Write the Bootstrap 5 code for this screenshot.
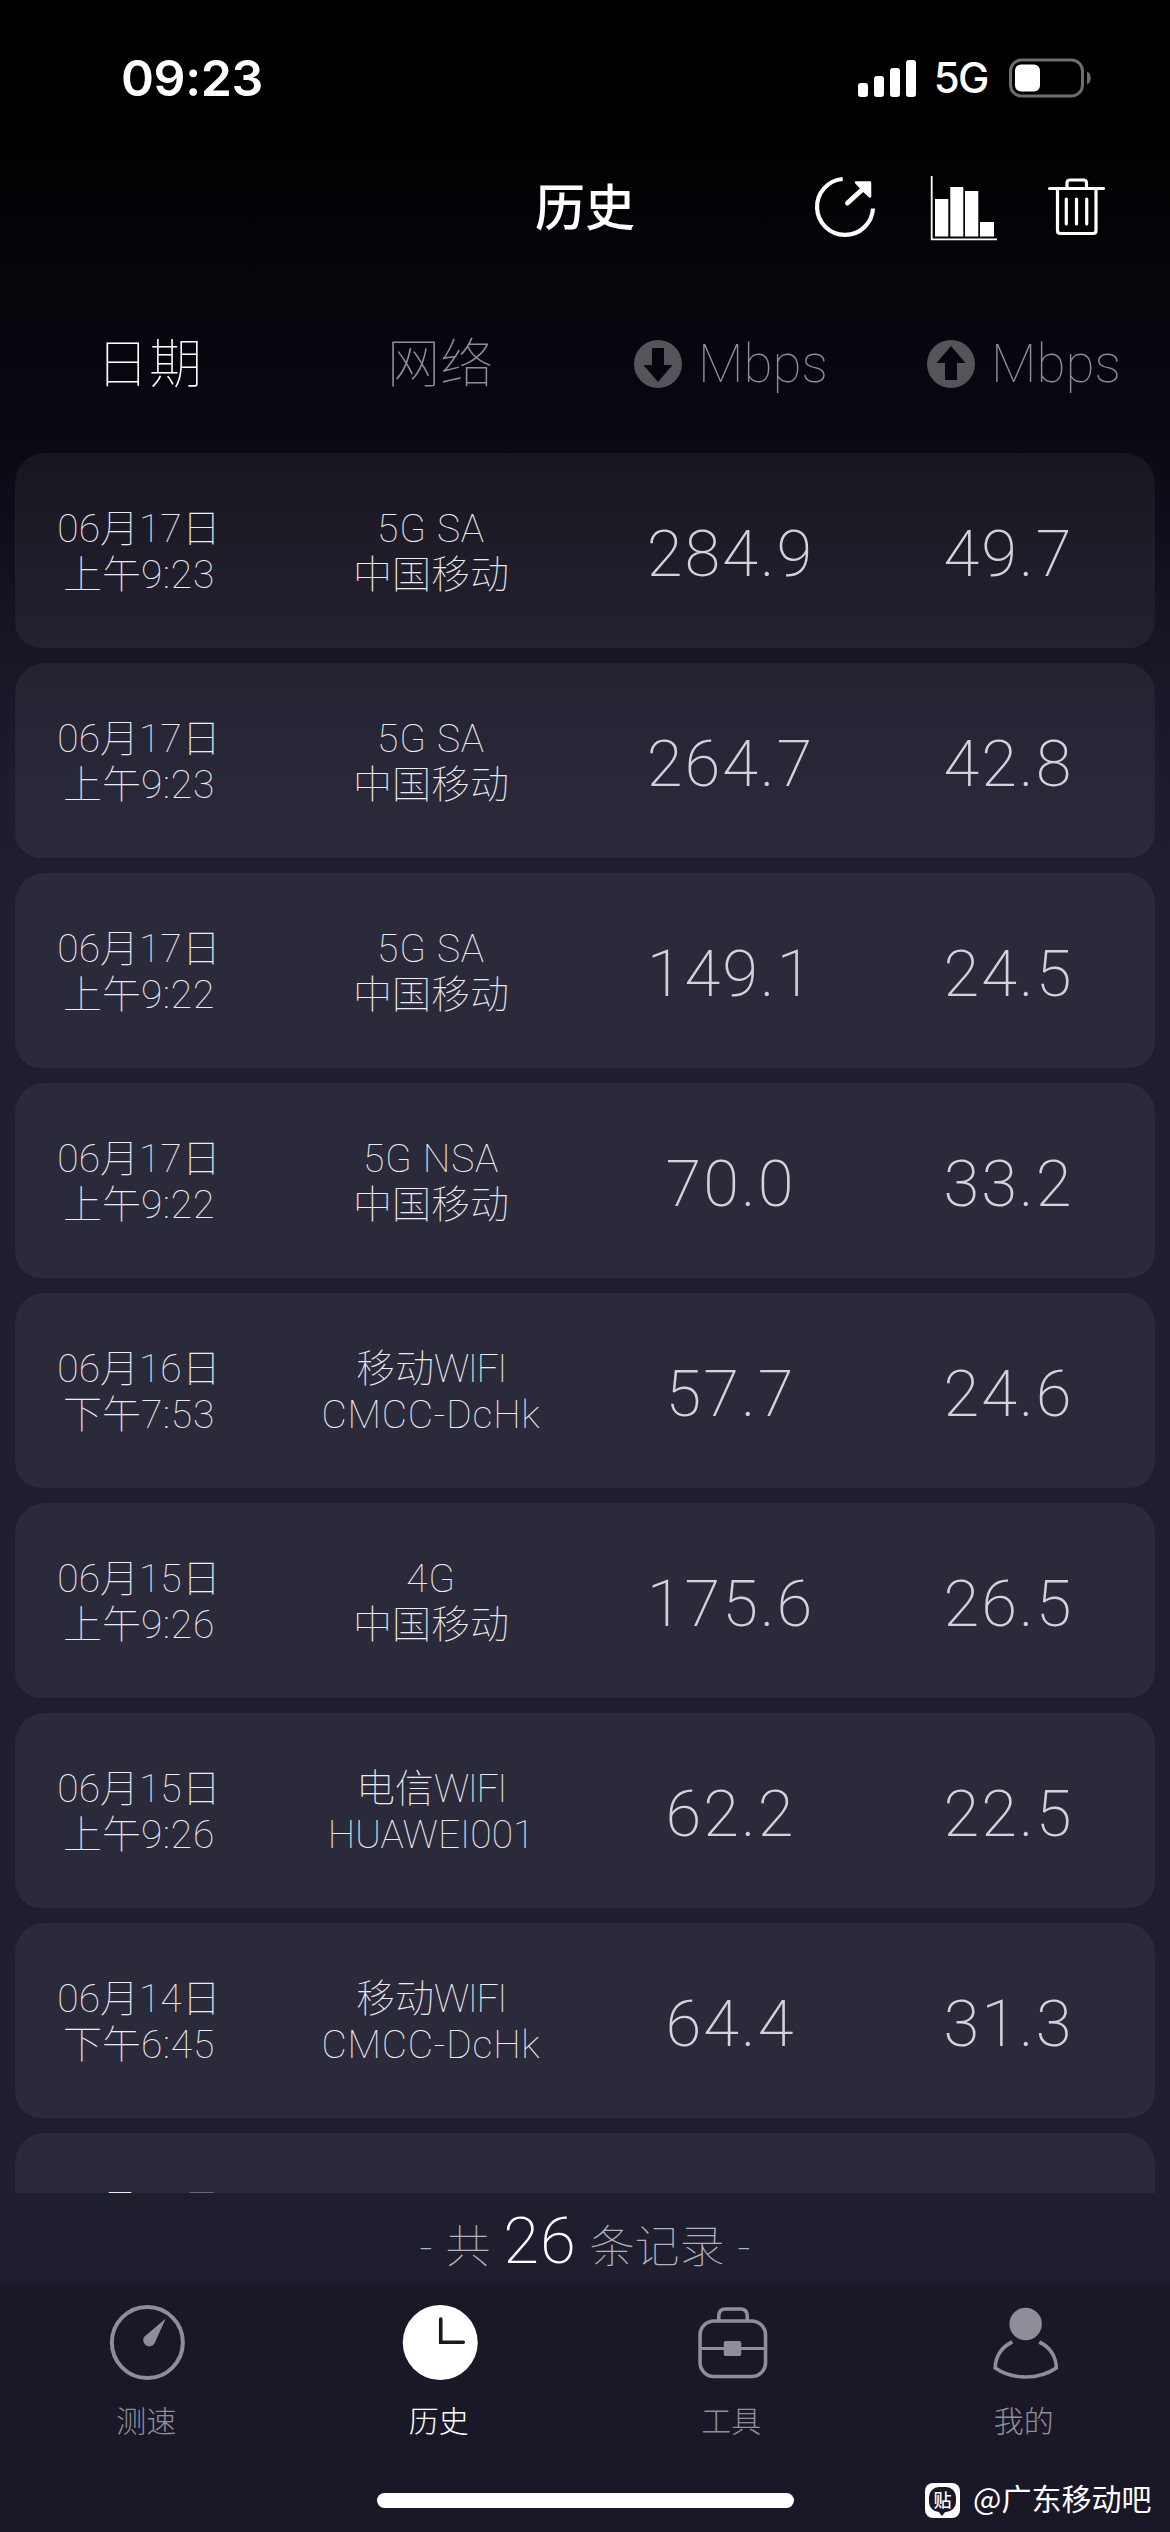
<!DOCTYPE html>
<html lang="zh-CN">
<head>
<meta charset="utf-8">
<meta name="viewport" content="width=device-width, initial-scale=1">
<title>历史</title>
<link href="https://cdn.jsdelivr.net/npm/bootstrap@5.3.0/dist/css/bootstrap.min.css" rel="stylesheet">
<style>
html,body{height:2532px;overflow:hidden}
body{width:1170px;color:#fff;font-family:Roboto,"Noto Sans CJK SC",sans-serif;background:linear-gradient(180deg,#000 0,#000 110px,#04040a 260px,#080812 420px,#0e0d19 520px,#171624 655px,#1c1b2d 760px,#1f1e2f 870px,#1f1e2f 100%)}
.statusbar{height:150px;padding:5px 79px 0 121px}
.clock{font:600 50px/54px Inter,sans-serif;letter-spacing:-.4px}
.net5g{font:500 42px/48px Inter,sans-serif;letter-spacing:-1.5px;margin:0 21px 0 18px}
.titlebar{height:114px;padding-top:24px}
.titlebar h1{font:500 50px/60px "Noto Sans CJK SC",sans-serif;margin:0}
.tools{right:0;top:0}
.cols{height:189px;padding-top:10px;font-weight:100;font-size:53px;line-height:60px;color:#8f8e96}
.cols span{margin-left:16px}
.h1c{width:298px;padding-top:3px}.h2c{width:284px;padding-top:3px;margin-right:52px}.h3c{width:293px}.h4c{width:240px}
.c1{width:248px}.c2{width:336px}.c3{width:263px}.c4{width:293px}
.record{height:195px;border-radius:30px 30px 26px 26px;background:rgba(255,255,255,.055);margin:0 15px 15px;color:#ecebf2;font-weight:100;flex:none}
.meta{font-size:39px;line-height:46px;padding-top:2px}
.meta i{font-style:normal;letter-spacing:.8px}
.meta i.wf{letter-spacing:-1.5px}
.num{font-size:65px;line-height:76px;font-weight:200;letter-spacing:2px;padding-top:6px;color:#d3d2da}
.list{height:1740px;overflow:hidden}
.summary{height:90px;padding-top:13px;font-weight:100;font-size:45px;color:#b3b2bc;word-spacing:2px}
.summary b{font-size:65px;font-weight:200;color:#fff;line-height:70px;letter-spacing:1px}
.tabs{height:249px;background:#1a1827}
.tab{width:292.5px;color:#8f8e98;font:300 30px/32px "Noto Sans CJK SC",sans-serif}
.tab.on{color:#fff}
.homebar{left:377px;top:2493px;width:417px;height:15px;border-radius:8px;background:#fff}
.wmark{left:925px;top:2477px;font:400 30px/40px "Noto Sans CJK SC",sans-serif}
.wmark .tb{width:35px;height:35px;border-radius:8px;background:#fff;margin:6px 13px 0 0;padding:4px 4px 0}
.wmark .tb span{display:block;position:relative;width:27px;height:25px;border-radius:10px;background:#1a1827;font:500 18px/24px "Noto Sans CJK SC",sans-serif;text-align:center}
.wmark .tb span::after{content:"";position:absolute;left:9px;top:24px;border:4.500px solid transparent;border-top:5px solid #1a1827;border-bottom:0}
svg{display:block}
</style>
</head>
<body>
<header class="statusbar d-flex align-items-center justify-content-between">
  <div class="clock">09:23</div>
  <div class="d-flex align-items-center">
    <svg width="58" height="38" fill="#fff"><rect y="24" width="10" height="14" rx="3"/><rect x="16" y="17" width="10" height="21" rx="3"/><rect x="32" y="9" width="10" height="29" rx="3"/><rect x="48" y="1" width="10" height="37" rx="3"/></svg>
    <span class="net5g">5G</span>
    <svg width="82" height="40"><rect x="1.500" y="2" width="72" height="36" rx="11" fill="none" stroke="#6d6d6f" stroke-width="3"/><rect x="6" y="6.500" width="25" height="27" rx="6" fill="#fff"/><path d="M78 13.500c5 2 5 11 0 13z" fill="#6d6d6f"/></svg>
  </div>
</header>
<div class="titlebar position-relative d-flex justify-content-center">
  <h1>历史</h1>
  <div class="tools position-absolute">
    <svg width="370" height="114" viewBox="800 150 370 114">
      <g fill="none" stroke="#fff">
        <path d="M842.700 179A28 28 0 1 0 873 208.500" stroke-width="4.200"/>
        <path d="M847.500 203L864 188" stroke-width="5" stroke-linecap="round"/>
        <path d="M856 182.500H870V196.500L864 191Z" fill="#fff" stroke-width="2.500" stroke-linejoin="round"/>
        <path d="M931.700 176V239.300H997" stroke-width="1.800"/>
        <path d="M1049.500 188.500H1103.500M1066.300 199V224M1076.500 199V224M1086.700 199V224" stroke-width="3.200" stroke-linecap="round"/>
        <path d="M1057.500 189V230.500q0 3 3 3h32.500q3 0 3-3V189M1067 188v-5q0-3 3-3h13.500q3 0 3 3v5" stroke-width="3.200"/>
      </g>
      <path fill="#fff" d="M935 199h13.300v37.500H935zM950.300 187h13v49.500h-13zM965 191h13.300v45.500H965zM980 222h14v14.500h-14z"/>
    </svg>
  </div>
</div>
<div class="cols d-flex align-items-center">
  <div class="h1c text-center text-white">日期</div>
  <div class="h2c text-center">网络</div>
  <div class="h3c d-flex align-items-center"><svg width="48" height="48"><circle cx="24" cy="24" r="24" fill="#55545b"/><path d="M18 8h12v17h8.500L24 42 9.500 25H18z" fill="#06060e"/></svg><span>Mbps</span></div>
  <div class="h4c d-flex align-items-center"><svg width="48" height="48"><circle cx="24" cy="24" r="24" fill="#55545b"/><path d="M18 40h12V23h8.500L24 6 9.500 23H18z" fill="#06060e"/></svg><span>Mbps</span></div>
</div>
<main class="list">
  <div class="record d-flex align-items-center text-center"><div class="c1 meta">06月17日<br>上午<i>9:23</i></div><div class="c2 meta"><i>5G SA</i><br>中国移动</div><div class="c3 num">284.9</div><div class="c4 num">49.7</div></div>
  <div class="record d-flex align-items-center text-center"><div class="c1 meta">06月17日<br>上午<i>9:23</i></div><div class="c2 meta"><i>5G SA</i><br>中国移动</div><div class="c3 num">264.7</div><div class="c4 num">42.8</div></div>
  <div class="record d-flex align-items-center text-center"><div class="c1 meta">06月17日<br>上午<i>9:22</i></div><div class="c2 meta"><i>5G SA</i><br>中国移动</div><div class="c3 num">149.1</div><div class="c4 num">24.5</div></div>
  <div class="record d-flex align-items-center text-center"><div class="c1 meta">06月17日<br>上午<i>9:22</i></div><div class="c2 meta"><i>5G NSA</i><br>中国移动</div><div class="c3 num">70.0</div><div class="c4 num">33.2</div></div>
  <div class="record d-flex align-items-center text-center"><div class="c1 meta">06月16日<br>下午<i>7:53</i></div><div class="c2 meta">移动<i class="wf">WIFI</i><br><i>CMCC-DcHk</i></div><div class="c3 num">57.7</div><div class="c4 num">24.6</div></div>
  <div class="record d-flex align-items-center text-center"><div class="c1 meta">06月15日<br>上午<i>9:26</i></div><div class="c2 meta"><i>4G</i><br>中国移动</div><div class="c3 num">175.6</div><div class="c4 num">26.5</div></div>
  <div class="record d-flex align-items-center text-center"><div class="c1 meta">06月15日<br>上午<i>9:26</i></div><div class="c2 meta">电信<i class="wf">WIFI</i><br>HUAWEI001</div><div class="c3 num">62.2</div><div class="c4 num">22.5</div></div>
  <div class="record d-flex align-items-center text-center"><div class="c1 meta">06月14日<br>下午<i>6:45</i></div><div class="c2 meta">移动<i class="wf">WIFI</i><br><i>CMCC-DcHk</i></div><div class="c3 num">64.4</div><div class="c4 num">31.3</div></div>
  <div class="record d-flex align-items-center text-center"><div class="c1 meta">06月14日<br>&nbsp;</div></div>
</main>
<div class="summary d-flex justify-content-center align-items-baseline"><span>- 共 <b>26</b> 条记录 -</span></div>
<nav class="tabs d-flex">
  <div class="tab d-flex flex-column align-items-center"><svg width="80" height="120" viewBox="106.250 2283 80 120"><circle cx="147.600" cy="2342.500" r="35.500" fill="none" stroke="#8f8e98" stroke-width="4"/><path d="M166 2318.500L154.500 2344A6 6 0 1 1 144.800 2336.500Z" fill="#8f8e98"/></svg>测速</div>
  <div class="tab on d-flex flex-column align-items-center"><svg width="80" height="120" viewBox="398.750 2283 80 120"><circle cx="440" cy="2342.500" r="37.500" fill="#fff"/><path d="M440.500 2319V2342.300H463" fill="none" stroke="#1a1827" stroke-width="3.600" stroke-linecap="round"/></svg>历史</div>
  <div class="tab d-flex flex-column align-items-center"><svg width="80" height="120" viewBox="691.250 2283 80 120"><g fill="none" stroke="#8f8e98" stroke-width="3.600"><rect x="700.300" y="2321" width="65.500" height="55.500" rx="14"/><path d="M719 2320v-4q0-7 7-7h14.500q7 0 7 7v4"/><path d="M701 2348.500H765" stroke-width="3"/></g><rect x="724" y="2341" width="17.500" height="15" rx="2" fill="#8f8e98"/></svg>工具</div>
  <div class="tab d-flex flex-column align-items-center"><svg width="80" height="120" viewBox="983.750 2283 80 120"><circle cx="1025.400" cy="2324" r="16.200" fill="#8f8e98"/><path d="M1012 2342C1001 2347 995 2357 995 2368Q1008 2377 1025.400 2377T1056 2368C1056 2357 1050 2347 1039 2342" fill="none" stroke="#8f8e98" stroke-width="3.600"/></svg>我的</div>
</nav>
<div class="homebar position-absolute"></div>
<div class="wmark position-absolute d-flex"><div class="tb"><span>贴</span></div><div>@广东移动吧</div></div>
<script src="https://cdn.jsdelivr.net/npm/bootstrap@5.3.0/dist/js/bootstrap.bundle.min.js"></script>
</body>
</html>
